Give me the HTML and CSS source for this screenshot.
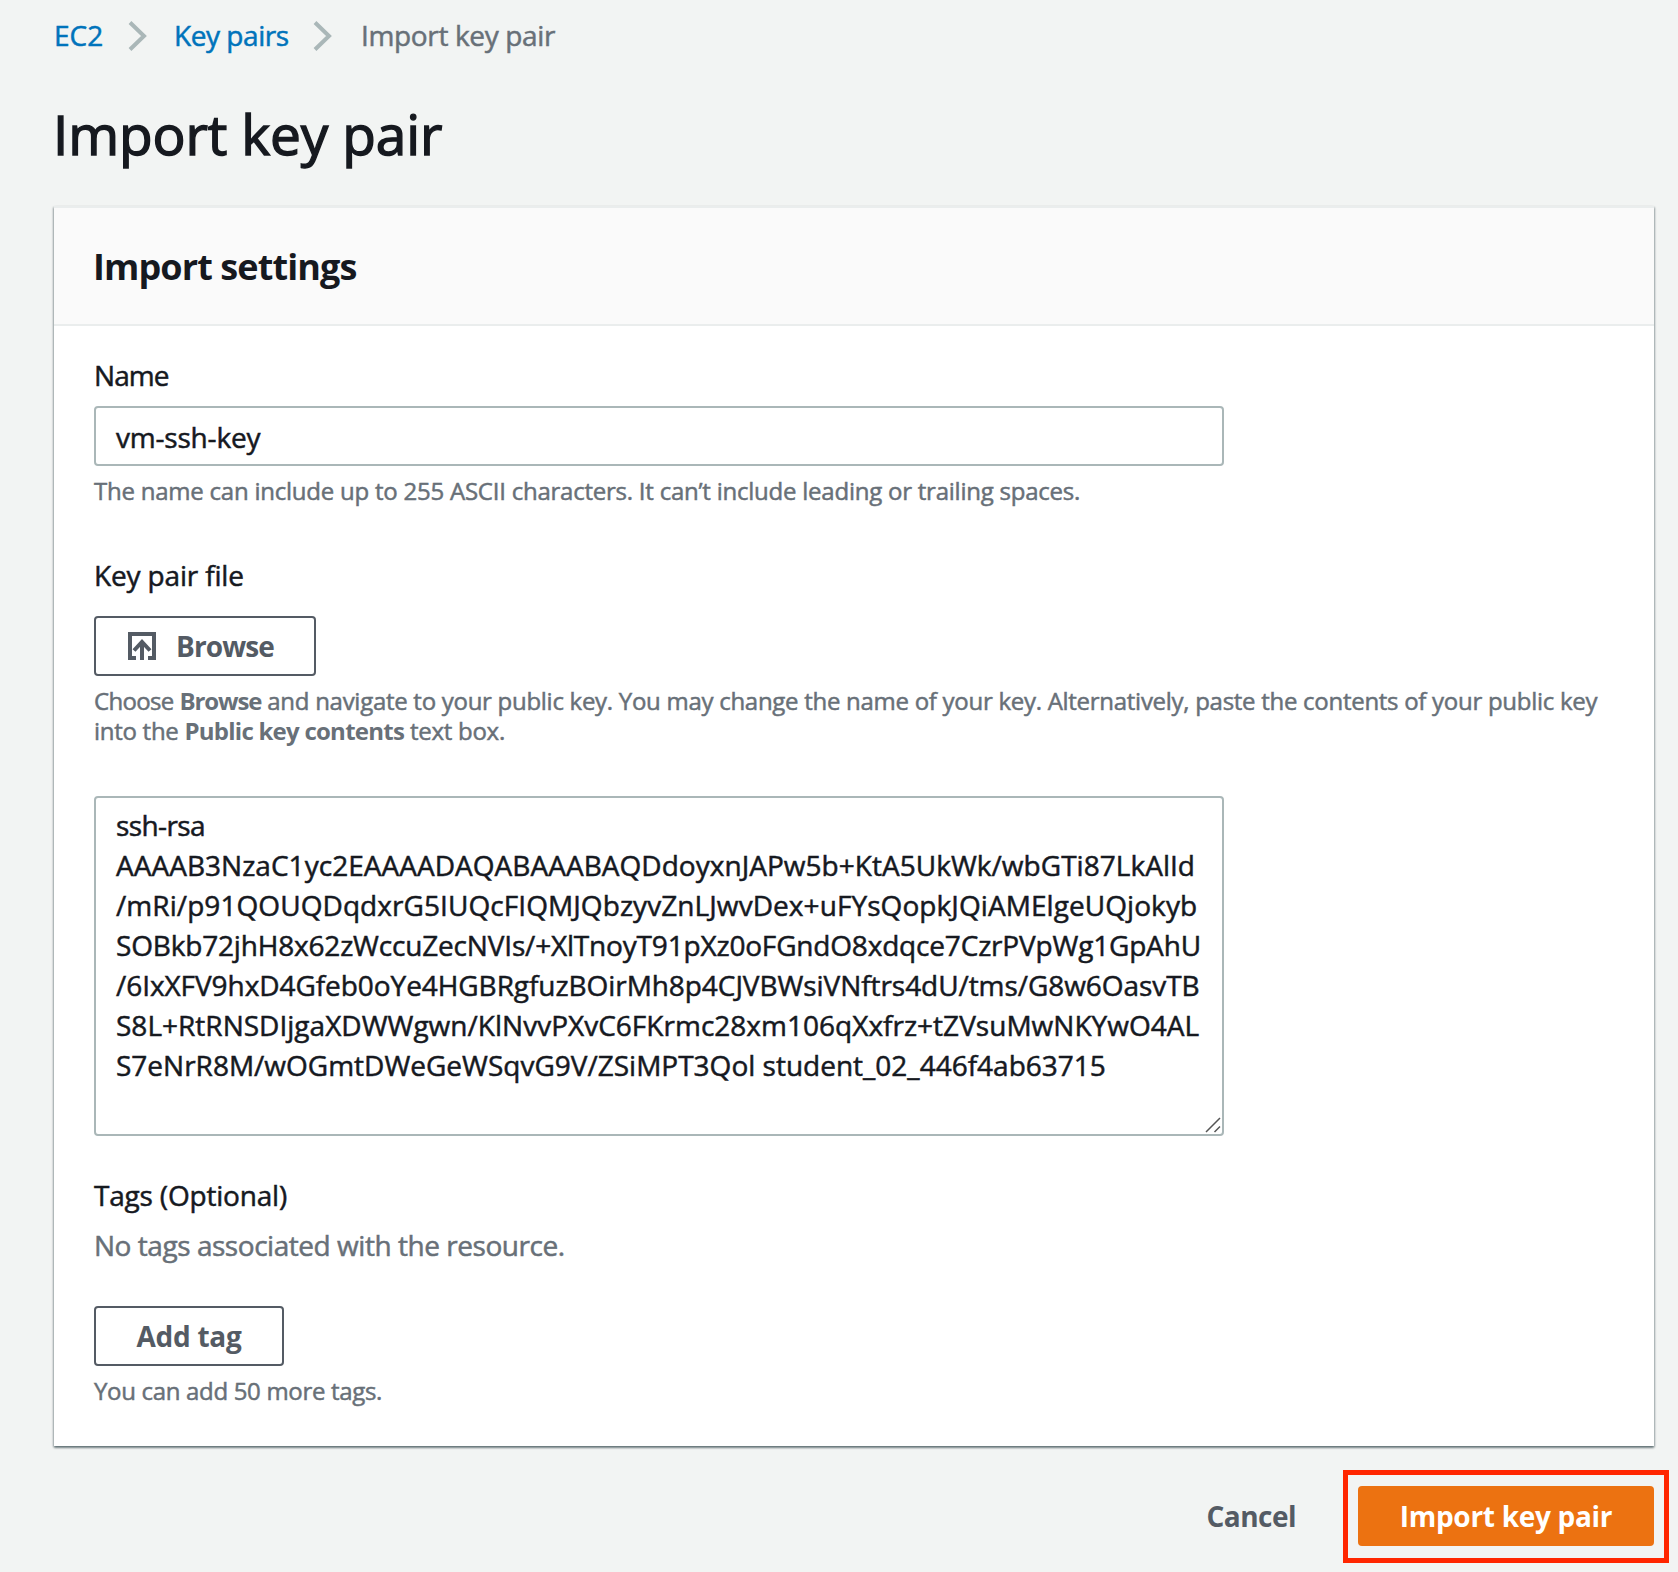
FILE: index.html
```html
<!DOCTYPE html>
<html lang="en">
<head>
<meta charset="utf-8">
<title>Import key pair</title>
<link rel="stylesheet" href="styles.css">
</head>
<body>
<main class="page">
  <nav class="breadcrumb" aria-label="Breadcrumb">
    <a class="crumb crumb-root" href="#">EC2</a>
    <svg class="chevron" viewBox="0 0 20 30" aria-hidden="true"><path d="M2 1.5L16 15L2 28.500"/></svg>
    <a class="crumb crumb-parent" href="#">Key pairs</a>
    <svg class="chevron" viewBox="0 0 20 30" aria-hidden="true"><path d="M2 1.5L16 15L2 28.500"/></svg>
    <span class="crumb crumb-current">Import key pair</span>
  </nav>

  <h1 class="title">Import key pair</h1>

  <section class="panel">
    <header class="panel-header"><h2 class="panel-title">Import settings</h2></header>
    <div class="panel-body">
      <div class="field field-name">
        <label class="label label-name">Name</label>
        <div class="input">vm-ssh-key</div>
        <p class="hint hint-name">The name can include up to 255 ASCII characters. It can’t include leading or trailing spaces.</p>
      </div>

      <div class="field field-file">
        <label class="label label-file">Key pair file</label>
        <button class="button button-browse" type="button">
          <svg class="upload" viewBox="0 0 28 28" aria-hidden="true"><path d="M8 26H2V2H26V26H20M14 28V10M6 18.500L14 10L22 18.500"/></svg>
          <span>Browse</span>
        </button>
        <p class="hint hint-file"><span class="choose">Choose</span> <b class="term-browse">Browse</b> and navigate to your public key. You may change the name of your key. Alternatively, paste the contents of your public key<br>into the <b>Public key contents</b> text box.</p>
      </div>

      <div class="textarea">
        <div class="key-line">ssh-rsa</div>
        <div class="key-line">AAAAB3NzaC1yc2EAAAADAQABAAABAQDdoyxnJAPw5b+KtA5UkWk/wbGTi87LkAlId</div>
        <div class="key-line">/mRi/p91QOUQDqdxrG5IUQcFIQMJQbzyvZnLJwvDex+uFYsQopkJQiAMElgeUQjokyb</div>
        <div class="key-line">SOBkb72jhH8x62zWccuZecNVIs/+XlTnoyT91pXz0oFGndO8xdqce7CzrPVpWg1GpAhU</div>
        <div class="key-line">/6IxXFV9hxD4Gfeb0oYe4HGBRgfuzBOirMh8p4CJVBWsiVNftrs4dU/tms/G8w6OasvTB</div>
        <div class="key-line">S8L+RtRNSDIjgaXDWWgwn/KlNvvPXvC6FKrmc28xm106qXxfrz+tZVsuMwNKYwO4AL</div>
        <div class="key-line">S7eNrR8M/wOGmtDWeGeWSqvG9V/ZSiMPT3Qol student_02_446f4ab63715</div>
        <svg class="grip" viewBox="0 0 16 16" aria-hidden="true"><path d="M1 15L15 1M9.500 15L15 9.500"/></svg>
      </div>

      <div class="field field-tags">
        <label class="label label-tags">Tags (Optional)</label>
        <p class="empty">No tags associated with the resource.</p>
        <button class="button button-tag" type="button">Add tag</button>
        <p class="hint hint-tags">You can add 50 more tags.</p>
      </div>
    </div>
  </section>

  <footer class="actions">
    <button class="cancel" type="button">Cancel</button>
    <button class="primary" type="button">Import key pair</button>
  </footer>
</main>
</body>
</html>
```
FILE: styles.css
```css
* { box-sizing: border-box; }

body {
  margin: 0;
  background: #f2f4f3;
  color: #16191f;
  font: 400 28px/40px "Open Sans", "Noto Sans", sans-serif;
  -webkit-text-stroke: .5px currentColor;
}

h1, h2, p { margin: 0; }

button {
  font: inherit;
  font-weight: 700;
  padding: 0;
  cursor: pointer;
}

button, b, .panel-title { -webkit-text-stroke: 0; }

.page {
  min-height: 1572px;
  padding: 15px 24px 0 54px;
}

/* Breadcrumb */
.breadcrumb { display: flex; align-items: center; height: 40px; }
.crumb { color: #0073bb; text-decoration: none; white-space: nowrap; }
.crumb-root { width: 74px; }
.crumb-parent { width: 139px; margin-left: 26px; letter-spacing: -.45px; }
.crumb-current { margin-left: 28px; color: #687078; letter-spacing: -.35px; }
.chevron { width: 20px; height: 30px; margin-top: 2px; flex: none; }
.chevron path { fill: none; stroke: #aab7b8; stroke-width: 4; }

.title {
  margin: 45px 0 0 -1px;
  font-size: 55px;
  line-height: 68px;
  font-weight: 400;
  letter-spacing: -.15px;
  -webkit-text-stroke-width: 1.4px;
}

/* Panel */
.panel {
  margin-top: 38px;
  border-top: 2px solid #eaeded;
  background: #fff;
  box-shadow: 0 2px 2px 0 rgba(0, 28, 36, .4), 1px 1px 2px 0 rgba(0, 28, 36, .22), -1px 1px 2px 0 rgba(0, 28, 36, .22);
}
.panel-header {
  padding: 37px 40px 35px 39px;
  border-bottom: 2px solid #eaeded;
  background: #fafafa;
}
.panel-title { font-size: 36px; line-height: 44px; font-weight: 700; letter-spacing: -.9px; }
.panel-body { padding: 29px 40px 40px; }

.field { display: flex; flex-direction: column; align-items: flex-start; }
.field-file { margin-top: 49px; }
.field-tags { margin-top: 39px; }

.label-name { letter-spacing: -.95px; }
.label-file { letter-spacing: -.16px; }
.label-tags { letter-spacing: -.19px; }

.input {
  width: 1130px;
  height: 60px;
  margin-top: 11px;
  padding: 9px 20px;
  border: 2px solid #aab7b8;
  border-radius: 4px;
  letter-spacing: -.2px;
}

.hint {
  margin-top: 10px;
  color: #687078;
  font-size: 24px;
  line-height: 30px;
  white-space: nowrap;
}
.hint-name { letter-spacing: -.232px; }
.hint-file { letter-spacing: -.28px; }
.hint-tags { letter-spacing: -.32px; }
.hint b { letter-spacing: -.75px; }
.hint .term-browse { letter-spacing: -1.1px; }
.choose { letter-spacing: -.7px; }

.button {
  display: flex;
  align-items: center;
  justify-content: center;
  height: 60px;
  padding-bottom: 1px;
  border: 2px solid #545b64;
  border-radius: 4px;
  background: #fff;
  color: #545b64;
}
.button-browse {
  width: 222px;
  margin-top: 21px;
  padding-left: 32px;
  justify-content: flex-start;
  gap: 20px;
  letter-spacing: -.9px;
}
.upload { width: 28px; height: 28px; margin-top: 1px; }
.upload path { fill: none; stroke: currentColor; stroke-width: 4; }
.button-tag { width: 190px; margin-top: 41px; letter-spacing: -.25px; }

.textarea {
  position: relative;
  width: 1130px;
  height: 340px;
  margin-top: 50px;
  padding: 7px 20px;
  border: 2px solid #aab7b8;
  border-radius: 4px;
}
.key-line { white-space: nowrap; letter-spacing: .015px; }
.key-line:nth-child(1) { letter-spacing: -.6px; }
.key-line:nth-child(2) { letter-spacing: .03px; }
.key-line:nth-child(3) { letter-spacing: .069px; }
.key-line:nth-child(4) { letter-spacing: -.18px; }
.key-line:nth-child(5) { letter-spacing: -.065px; }
.key-line:nth-child(7) { letter-spacing: 0; }
.grip { position: absolute; right: 1px; bottom: 1px; width: 16px; height: 16px; }
.grip path { fill: none; stroke: #555; stroke-width: 1.500; }

.empty { margin-top: 10px; color: #687078; letter-spacing: -.46px; }

/* Actions */
.actions { display: flex; justify-content: flex-end; margin-top: 40px; }
.cancel {
  height: 60px;
  margin-right: 62px;
  padding-bottom: 1px;
  border: 0;
  background: none;
  color: #545b64;
  letter-spacing: -.52px;
}
.primary {
  position: relative;
  width: 296px;
  height: 60px;
  padding-bottom: 1px;
  border: 0;
  border-radius: 4px;
  background: #ec7211;
  color: #fff;
  letter-spacing: -.3px;
}
.primary::after {
  content: "";
  position: absolute;
  inset: -16.5px -14.5px -16.5px -15.5px;
  border: 5px solid #ff2600;
}
```
